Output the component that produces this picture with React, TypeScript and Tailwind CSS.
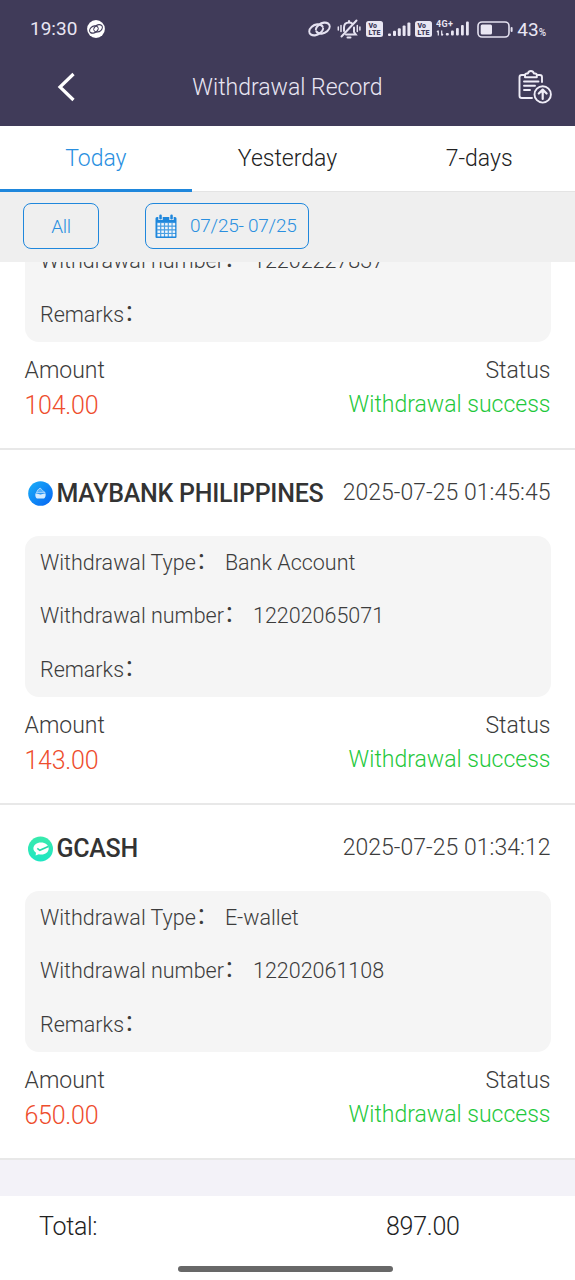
import type { ReactNode } from 'react';

type RecordItem = {
  bank?: 'maybank' | 'gcash';
  name?: string;
  time?: string;
  type?: string;
  number: string;
  amount: string;
};

const records: RecordItem[] = [
  { number: '12202227837', amount: '104.00' },
  { bank: 'maybank', name: 'MAYBANK PHILIPPINES', time: '2025-07-25 01:45:45', type: 'Bank Account', number: '12202065071', amount: '143.00' },
  { bank: 'gcash', name: 'GCASH', time: '2025-07-25 01:34:12', type: 'E-wallet', number: '12202061108', amount: '650.00' },
];

function LinkPaths() {
  return (
    <>
      <path d="M15.800 8.600C15.400 11.400 11.500 14.300 7.300 14.700 3.900 15 1.300 13.700 1.300 11.200c0-3 4-6 8.200-6.300 2.600-.2 4.800.5 5.800 2" />
      <path d="M8.200 9.400C8.600 6.600 12.500 3.700 16.700 3.300c3.400-.3 6 1 6 3.500 0 3-4 6-8.200 6.300-2.600.2-4.800-.5-5.800-2" />
    </>
  );
}

function LinkIcon() {
  return (
    <svg className="h-[20px] w-[23px]" viewBox="0 0 24 18" preserveAspectRatio="none" fill="none" stroke="#e4e1f0" strokeWidth="2" strokeLinecap="round">
      <LinkPaths />
    </svg>
  );
}

function AppBadge() {
  return (
    <svg className="h-[18px] w-[18px]" viewBox="0 0 18 18">
      <circle cx="9" cy="9" r="8.900" fill="#fff" />
      <g transform="translate(1.800 2.300) scale(0.6 0.74)" fill="none" stroke="#403b59" strokeWidth="1.700" strokeLinecap="round">
        <LinkPaths />
      </g>
    </svg>
  );
}

function MuteBell() {
  return (
    <svg className="h-[22px] w-[24px]" viewBox="0 0 24 22" fill="none" stroke="#e4e1f0" strokeWidth="2" strokeLinecap="round">
      <path d="M7 13V9.500C7 6.500 9 4.500 12 4.500c1.400 0 2.500.4 3.400 1.200M17 9.500V14l1.800 2.500H9" />
      <path d="M12 4.300V3M10.500 19.500h3M4.500 18.500 19.500 2.500" />
      <path d="M4 7.500v6M1.300 9v3M20.300 7.500v6M22.900 9v3" strokeWidth="1.500" />
    </svg>
  );
}

function VoLte() {
  return (
    <svg className="h-[16px] w-[17px]" viewBox="0 0 17 16">
      <rect width="17" height="16" rx="2.500" fill="#e9e6f3" />
      <g fill="#403b5a" fontFamily="Roboto, sans-serif" fontWeight="900">
        <text x="2.500" y="7.200" fontSize="7" textLength="8.500">Vo</text>
        <text x="2.500" y="14" fontSize="7" textLength="12">LTE</text>
      </g>
    </svg>
  );
}

function Signal() {
  return (
    <svg className="h-[16px] w-[23px]" viewBox="0 0 23 16" fill="#e9e6f3">
      <rect x="0" y="12.500" width="3" height="2.500" rx="1" />
      <rect x="5" y="9.800" width="3" height="5.200" rx="1" />
      <rect x="9.800" y="7.300" width="3" height="7.700" rx="1" />
      <rect x="14.600" y="4.600" width="3" height="10.400" rx="1" />
      <rect x="19.400" y="1.500" width="3" height="13.500" rx="1" />
    </svg>
  );
}

function Signal4G() {
  return (
    <svg className="h-[20px] w-[34px]" viewBox="0 0 34 20" fill="#e9e6f3">
      <text x="0" y="8.300" fontSize="9" fontWeight="700" fontFamily="Roboto, sans-serif" textLength="17">4G+</text>
      <path d="M2.300 16.500v-5M1 13.200l1.300-1.500M5.700 11.500v5M7 15l-1.300 1.500" stroke="#e9e6f3" strokeWidth="1.200" />
      <rect x="9.800" y="14" width="3" height="2.500" rx="1" />
      <rect x="15" y="11.500" width="2.800" height="5" rx="1" />
      <rect x="20" y="9" width="2.800" height="7.500" rx="1" />
      <rect x="25" y="6" width="2.800" height="10.500" rx="1" />
      <rect x="30" y="2.500" width="2.800" height="14" rx="1" />
    </svg>
  );
}

function Battery() {
  return (
    <svg className="h-[17px] w-[36px]" viewBox="0 0 36 17">
      <rect x="1" y="1" width="31" height="15" rx="4" fill="none" stroke="#e4e1f0" strokeWidth="1.600" />
      <rect x="3.700" y="3.500" width="11.300" height="10" rx="1.500" fill="#e9e6f3" />
      <rect x="33.600" y="6" width="2" height="5" rx="1" fill="#e4e1f0" />
    </svg>
  );
}

function ClipboardUp() {
  return (
    <svg className="h-[34px] w-[34px]" viewBox="0 0 34 34" fill="none" stroke="#efedf7" strokeWidth="1.900" strokeLinecap="round" strokeLinejoin="round">
      <path d="M7 5H3.800C2.500 5 1.500 6 1.500 7.300v18.400c0 1.300 1 2.300 2.300 2.300H14M19.500 5h2.200C23 5 24 6 24 7.300V12" />
      <path d="M7 7.300V5.200c0-1 .8-1.700 1.800-1.700h1.100C10.300 2 11.500 1 12.900 1s2.600 1 3 2.500H17c1 0 1.800.7 1.800 1.700v2.100z" />
      <path d="M6 11.500h14.500M6 15.700h11M6 20h6" />
      <circle cx="24.700" cy="24.400" r="8.200" />
      <path d="M24.700 29v-8.500M20.800 23.500l3.900-3.900 3.900 3.900" strokeWidth="2.200" />
    </svg>
  );
}

function CalendarIcon() {
  const rows = [9.300, 13, 16.700, 20.200];
  const cols = [3, 6.800, 10.600, 14.400, 18.100];
  return (
    <svg className="h-[25px] w-[22px]" viewBox="0 0 22 25">
      <path d="M2 3h18a1.500 1.500 0 0 1 1.500 1.500v18.500a1 1 0 0 1-1 1H1.500a1 1 0 0 1-1-1V4.500A1.500 1.500 0 0 1 2 3z" fill="#1f87dc" />
      <path d="M3.300 2v4h4.400V2M14.300 2v4h4.400V2" fill="#efefef" />
      <rect x="4.300" y="0.500" width="2.500" height="5" rx="1.200" fill="#1f87dc" />
      <rect x="15.300" y="0.500" width="2.500" height="5" rx="1.200" fill="#1f87dc" />
      <rect x="2" y="8.300" width="18" height="14.200" fill="#4a9fe3" />
      {rows.map((y) => cols.map((x) => (
        <rect key={`${x}-${y}`} x={x - 0.500} y={y - 0.200} width="2.600" height="2.400" fill="#f2f6fa" />
      )))}
    </svg>
  );
}

function BankLogo({ bank }: { bank?: RecordItem['bank'] }) {
  if (bank === 'maybank') {
    return (
      <svg className="h-[26px] w-[26px] shrink-0" viewBox="0 0 26 26">
        <defs>
          <linearGradient id="blue" x1="0" y1="0" x2="1" y2="1">
            <stop offset="0" stopColor="#1ab0f8" />
            <stop offset="1" stopColor="#0763f2" />
          </linearGradient>
        </defs>
        <circle cx="12.500" cy="12.500" r="12.300" fill="url(#blue)" />
        <path d="M7.500 12.300l5 1.300 5-1.300c.6 2.500-.3 4.600-1.500 5.200H8.900c-1.200-.7-2-2.800-1.400-5.200z" fill="#d5ebff" />
        <path d="M8.400 11.700c1-1.800 2-4.200 3.800-4.400 1.600.2 1.200 2 2.600 2.700 1 .4 1.800.6 2.200 1.700z" fill="#58b2fb" stroke="#b8dcff" strokeWidth="0.900" />
      </svg>
    );
  }
  return (
    <svg className="h-[26px] w-[26px] shrink-0" viewBox="0 0 26 26">
      <defs>
        <linearGradient id="mint" x1="0" y1="0" x2="0" y2="1">
          <stop offset="0" stopColor="#39eaac" />
          <stop offset="1" stopColor="#1fe6c3" />
        </linearGradient>
      </defs>
      <circle cx="12.500" cy="13" r="12.500" fill="url(#mint)" />
      <path d="M13 6.600c4.300 0 7.700 2.600 7.700 6s-3.100 6-7.300 6c-.9 0-1.800-.1-2.600-.4l-3.200 1.300.4-2.700c-1.600-1.100-2.600-2.500-2.600-4.200 0-3.400 3.300-6 7.600-6z" fill="#fff" />
      <path d="M9.300 12.300l2.500 2 8.500-3.800" fill="none" stroke="#24d9a9" strokeWidth="1.600" />
    </svg>
  );
}

function Row({ label, children }: { label: string; children?: ReactNode }) {
  return (
    <div className="flex h-[53.500px] items-center whitespace-pre">
      <span>{label}</span>
      <span className="-translate-y-[2px] font-normal">：</span>
      <span className="ml-[7.500px]">{children}</span>
    </div>
  );
}

function RecordCard({ item }: { item: RecordItem }) {
  return (
    <article className="flex shrink-0 flex-col border-b-2 border-[#e8e8e8] bg-white px-[24.500px] pb-[25px]">
      {item.name && (
        <header className="flex h-[86px] items-center justify-between pt-[1px] pl-[3px]">
          <div className="flex items-center gap-[3px]">
            <BankLogo bank={item.bank} />
            <h2 className="text-[25px] font-medium tracking-[-0.270px] whitespace-nowrap text-[#333]">{item.name}</h2>
          </div>
          <time className="text-[23px] tracking-[0.040px] whitespace-nowrap">{item.time}</time>
        </header>
      )}
      <section className="shrink-0 rounded-[14px] bg-[#f5f5f5] px-[15.500px] pb-[0.500px] text-[21.500px]">
        {item.type && <Row label="Withdrawal Type">{item.type}</Row>}
        <Row label="Withdrawal number">{item.number}</Row>
        <Row label="Remarks" />
      </section>
      <footer className="flex h-[81px] justify-between pt-[12px] text-[23px] leading-[34.500px]">
        <div>
          <p>Amount</p>
          <p className="text-[25px] tracking-[-0.250px] text-[#ee4d2d]">{item.amount}</p>
        </div>
        <div className="text-right">
          <p>Status</p>
          <p className="-mt-[0.500px] text-[#1fc83c]">Withdrawal success</p>
        </div>
      </footer>
    </article>
  );
}

export default function App() {
  return (
    <main className="flex h-[1280px] w-[575px] flex-col overflow-hidden bg-white font-['Roboto','Noto_Sans_CJK_SC',sans-serif] font-light text-[#3c3c3c]">
      <div className="h-[126px] shrink-0 bg-[#403b59] text-[#e9e6f3]">
        <div className="flex h-[58px] items-center pr-[29px] pl-[30px]">
          <span className="text-[19px] font-normal">19:30</span>
          <span className="ml-[10px]"><AppBadge /></span>
          <div className="ml-auto flex items-center">
            <LinkIcon />
            <span className="ml-[6px]"><MuteBell /></span>
            <span className="ml-[5px]"><VoLte /></span>
            <span className="ml-[5px]"><Signal /></span>
            <span className="ml-[4px]"><VoLte /></span>
            <span className="ml-[4px]"><Signal4G /></span>
            <span className="ml-[7px]"><Battery /></span>
            <span className="ml-[4px] text-[19px] leading-none font-normal">43<span className="text-[10px] font-medium">%</span></span>
          </div>
        </div>
        <nav className="grid h-[58px] grid-cols-[1fr_auto_1fr] items-center pr-[23px] pl-[57px]">
          <svg className="h-[30px] w-[20px]" viewBox="0 0 20 30" fill="none" stroke="#fff" strokeWidth="3.200">
            <path d="M16.500 2 3 15l13.500 13" />
          </svg>
          <h1 className="-ml-[34px] pt-[3px] text-[23px] whitespace-nowrap">Withdrawal Record</h1>
          <span className="justify-self-end"><ClipboardUp /></span>
        </nav>
      </div>

      <div className="grid h-[66px] shrink-0 grid-cols-3 text-[23px] leading-[28px] text-[#222]">
        <div className="flex items-center justify-center border-b-[3px] border-[#1f87dc] pt-[2px] text-[#2a8fdf]">Today</div>
        <div className="flex items-center justify-center border-b border-[#e4e4e4] pt-[1px]">Yesterday</div>
        <div className="flex items-center justify-center border-b border-[#e4e4e4] pt-[1px]">7-days</div>
      </div>

      <div className="flex h-[70px] shrink-0 items-center bg-[#efefef] pb-[2px] pl-[23px] text-[19px] leading-[24px] tracking-[-0.250px] text-[#2a8fdf]">
        <button className="h-[46px] w-[76px] rounded-[8px] border border-[#1f87dc] pt-[1px]">All</button>
        <button className="ml-[46px] flex h-[46px] w-[164px] items-center rounded-[8px] border border-[#1f87dc] pl-[9px]">
          <CalendarIcon />
          <span className="ml-[13px] whitespace-nowrap">07/25- 07/25</span>
        </button>
      </div>

      <div className="flex h-[934px] shrink-0 flex-col justify-end overflow-hidden">
        {records.map((r) => <RecordCard key={r.number} item={r} />)}
        <div className="h-[36px] shrink-0 bg-[#f3f2f8]" />
      </div>

      <div className="flex h-[61px] shrink-0 items-center text-[25px] tracking-[-0.300px] text-[#222]">
        <span className="w-[386px] pl-[39px]">Total:</span>
        <span>897.00</span>
      </div>
      <div className="mx-auto mt-[9px] h-[6px] w-[215px] -translate-x-[2px] rounded-full bg-[#686868]" />
    </main>
  );
}
